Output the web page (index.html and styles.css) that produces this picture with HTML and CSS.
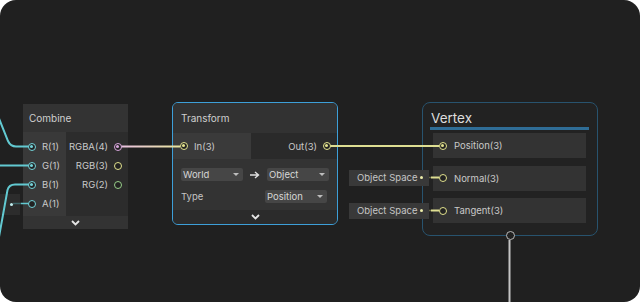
FILE: index.html
```html
<!DOCTYPE html>
<html lang="en">
<head>
    <meta charset="UTF-8">
    <meta name="viewport" content="width=device-width, initial-scale=1.0">
    <title>Shader Graph</title>
    <link rel="stylesheet" href="styles.css">
</head>
<body>
    <div class="graph">
        <!-- inline default value for A(1) -->
        <div class="inline-value combine-a"><span class="dot teal-dot"></span></div>

        <!-- Combine node -->
        <div class="node combine">
            <div class="node-title">Combine</div>
            <div class="node-ports">
                <div class="inputs">
                    <div class="slot"><span class="port teal on"></span>R(1)</div>
                    <div class="slot"><span class="port teal on"></span>G(1)</div>
                    <div class="slot"><span class="port teal on"></span>B(1)</div>
                    <div class="slot"><span class="port teal"></span>A(1)</div>
                </div>
                <div class="outputs">
                    <div class="slot">RGBA(4)<span class="port pink on"></span></div>
                    <div class="slot">RGB(3)<span class="port yellow"></span></div>
                    <div class="slot">RG(2)<span class="port green"></span></div>
                </div>
            </div>
            <div class="node-footer">
                <svg width="9" height="6" viewBox="0 0 9 6"><polyline points="1,1 4.5,4.5 8,1" fill="none" stroke="#e6e6e6" stroke-width="1.8"/></svg>
            </div>
        </div>

        <!-- Transform node -->
        <div class="node transform">
            <div class="node-title">Transform</div>
            <div class="node-ports">
                <div class="inputs">
                    <div class="slot"><span class="port yellow on"></span>In(3)</div>
                </div>
                <div class="outputs">
                    <div class="slot">Out(3)<span class="port yellow on"></span></div>
                </div>
            </div>
            <div class="node-controls">
                <div class="control-row">
                    <div class="dropdown">World<span class="caret"></span></div>
                    <svg class="arrow" width="10" height="8" viewBox="0 0 10 8"><path d="M0 4 H8 M5 1 L8.5 4 L5 7" fill="none" stroke="#e0e0e0" stroke-width="1.4"/></svg>
                    <div class="dropdown">Object<span class="caret"></span></div>
                </div>
                <div class="control-row">
                    <span class="control-label">Type</span>
                    <div class="dropdown type">Position<span class="caret"></span></div>
                </div>
            </div>
            <div class="node-footer">
                <svg width="9" height="6" viewBox="0 0 9 6"><polyline points="1,1 4.5,4.5 8,1" fill="none" stroke="#e6e6e6" stroke-width="1.8"/></svg>
            </div>
        </div>

        <!-- Vertex master stack -->
        <div class="node vertex">
            <div class="vertex-title">Vertex</div>
            <div class="vertex-bar"></div>
            <div class="blocks">
                <div class="block"><span class="port yellow on"></span>Position(3)</div>
                <div class="block"><span class="port yellow"></span>Normal(3)</div>
                <div class="block"><span class="port yellow"></span>Tangent(3)</div>
            </div>
            <span class="port gray stack-port"></span>
        </div>

        <div class="inline-value space normal-space">Object Space<span class="dot yellow-dot"></span></div>
        <div class="inline-value space tangent-space">Object Space<span class="dot yellow-dot"></span></div>

        <svg class="wires" width="640" height="302" viewBox="0 0 640 302">
            <defs>
                <linearGradient id="rgba-in" x1="118" y1="0" x2="183" y2="0" gradientUnits="userSpaceOnUse">
                    <stop offset="0" stop-color="#e9bfe3"/>
                    <stop offset="1" stop-color="#e6e69a"/>
                </linearGradient>
            </defs>
            <!-- vector1 wires into Combine -->
            <path d="M-2 116 L8 141 Q10.5 146.5 16 146.5 L29 146.5" class="wire teal-wire"/>
            <path d="M-2 165.5 L29 165.5" class="wire teal-wire"/>
            <path d="M-1 237 L7.5 190 Q9 184.5 15 184.5 L29 184.5" class="wire teal-wire"/>
            <path d="M13 203.5 L21 203.5" class="stub teal-dim"/>
            <path d="M21 203.5 L29 203.5" class="stub teal-wire"/>
            <!-- Combine -> Transform -->
            <path d="M121 146.5 L180 146.5" class="wire" stroke="url(#rgba-in)"/>
            <!-- Transform -> Vertex -->
            <path d="M330 146 L439 146" class="wire yellow-wire"/>
            <!-- Object Space stubs -->
            <path d="M423 177.5 L431 177.5" class="stub yellow-dim"/>
            <path d="M431 177.5 L439 177.5" class="wire yellow-wire"/>
            <path d="M423 210.5 L431 210.5" class="stub yellow-dim"/>
            <path d="M431 210.5 L439 210.5" class="wire yellow-wire"/>
            <!-- stack output -->
            <path d="M509.5 240 L509.5 304" class="wire gray-wire"/>
        </svg>
    </div>
</body>
</html>
```

FILE: styles.css
```css
body, html {
    margin: 0;
    padding: 0;
    background-color: #ffffff;
    font-family: Inter, "Noto Sans", sans-serif;
}
.graph {
    position: relative;
    width: 640px;
    height: 302px;
    background-color: #202020;
    border-radius: 16px;
    overflow: hidden;
}
.wires {
    position: absolute;
    left: 0;
    top: 0;
    z-index: 2;
    pointer-events: none;
}
.wire {
    fill: none;
    stroke-width: 2;
}
.stub {
    fill: none;
    stroke-width: 1.5;
}
.teal-wire { stroke: #62c9d1; }
.teal-dim { stroke: #3d6669; }
.yellow-wire { stroke: #dede92; }
.yellow-dim { stroke: #6a6a45; }
.gray-wire { stroke: #c4c4c4; }

/* nodes */
.node {
    position: absolute;
    display: flex;
    flex-direction: column;
    color: #c9c9c9;
    font-size: 9.5px;
}
.node-title {
    display: flex;
    align-items: center;
    padding-left: 6px;
    font-size: 10px;
    color: #cfcfcf;
    background-color: #333333;
}
.node-ports {
    display: flex;
}
.inputs {
    display: flex;
    flex-direction: column;
    background-color: #393939;
}
.outputs {
    flex: 1;
    display: flex;
    flex-direction: column;
    align-items: flex-end;
    background-color: #2c2c2c;
}
.slot {
    display: flex;
    align-items: center;
    height: 19px;
}
.inputs .slot .port {
    margin: 0 6px 0 5px;
}
.outputs .slot .port {
    margin: 0 6px 0 6px;
}
.node-footer {
    display: flex;
    justify-content: center;
    align-items: center;
    background-color: #303030;
}

/* ports */
.port {
    position: relative;
    z-index: 3;
    width: 8px;
    height: 8px;
    box-sizing: border-box;
    border-radius: 50%;
    border: 1.5px solid;
    background-color: #222222;
    flex-shrink: 0;
}
.port.on::after {
    content: "";
    position: absolute;
    left: 1px;
    top: 1px;
    width: 3px;
    height: 3px;
    border-radius: 50%;
    background-color: currentColor;
}
.teal { color: #74d3d9; border-color: #74d3d9; }
.pink { color: #d8a6dc; border-color: #d8a6dc; }
.yellow { color: #e2e28e; border-color: #e2e28e; }
.green { color: #98cf8a; border-color: #98cf8a; }
.gray { color: #b8b8b8; border-color: #b8b8b8; }

/* Combine */
.combine {
    left: 23px;
    top: 104px;
    width: 105px;
}
.combine .node-title {
    height: 28px;
}
.combine .inputs {
    width: 43px;
    padding: 5px 0 3px;
}
.combine .outputs {
    padding: 5px 0 3px;
}
.combine .node-footer {
    height: 13px;
    background-color: #333333;
}

/* Transform */
.transform {
    left: 172px;
    top: 102px;
    width: 164px;
    border: 1px solid #3d9fd8;
    border-radius: 6px;
    overflow: hidden;
    background-color: #303030;
}
.transform .node-title {
    height: 30px;
    padding-left: 8px;
    background-color: #323232;
}
.transform .node-ports {
    height: 26px;
}
.transform .inputs {
    width: 78px;
    justify-content: center;
    background-color: #3a3a3a;
}
.transform .outputs {
    justify-content: center;
    background-color: #2a2a2a;
}
.transform .inputs .slot .port {
    margin: 0 6px 0 7px;
}
.transform .outputs .slot .port {
    margin: 0 6px 0 6px;
}
.node-controls {
    display: flex;
    flex-direction: column;
    gap: 9px;
    padding: 9px 8px 7px 8px;
    background-color: #333333;
}
.control-row {
    display: flex;
    align-items: center;
    justify-content: space-between;
    height: 13px;
}
.control-label {
    color: #c4c4c4;
}
.dropdown {
    display: flex;
    align-items: center;
    justify-content: space-between;
    box-sizing: border-box;
    width: 62px;
    height: 13px;
    padding: 0 4px 0 2px;
    border-radius: 2px;
    background-color: #464646;
    color: #d6d6d6;
}
.dropdown.type {
    margin-right: 2px;
}
.caret {
    width: 0;
    height: 0;
    border-left: 3px solid transparent;
    border-right: 3px solid transparent;
    border-top: 3.5px solid #bdbdbd;
}
.transform .node-footer {
    height: 14px;
    background-color: #2b2b2b;
}

/* Vertex stack */
.vertex {
    left: 422px;
    top: 102px;
    width: 174px;
    height: 132px;
    border: 1px solid #28536e;
    border-radius: 8px;
    background-color: #222222;
}
.vertex-title {
    padding: 7px 0 0 8px;
    height: 17px;
    line-height: 17px;
    font-size: 13.5px;
    color: #dddddd;
}
.vertex-bar {
    height: 3px;
    margin: 0 8px 0 7px;
    background-color: #2f6d96;
}
.blocks {
    display: flex;
    flex-direction: column;
    gap: 7.5px;
    margin: 3px 11px 0 10px;
}
.block {
    display: flex;
    align-items: center;
    height: 25px;
    background-color: #333333;
}
.block .port {
    margin: 0 7px 0 6px;
}
.stack-port {
    position: absolute;
    left: 83px;
    bottom: -5px;
    width: 9px;
    height: 9px;
    background-color: #202020;
}

/* inline default values */
.inline-value {
    position: absolute;
    z-index: 3;
    display: flex;
    align-items: center;
    box-sizing: border-box;
}
.combine-a {
    z-index: 0;
    left: 0;
    top: 194px;
    width: 20px;
    height: 21px;
    justify-content: flex-end;
    padding-right: 7px;
    background-color: #2c2c2c;
}
.space {
    left: 349px;
    width: 80px;
    height: 16px;
    padding: 0 6px 0 8px;
    justify-content: space-between;
    background-color: #393939;
    color: #c6c6c6;
    font-size: 9.5px;
}
.normal-space { top: 169.5px; }
.tangent-space { top: 202.5px; }
.dot {
    width: 3px;
    height: 3px;
    border-radius: 50%;
}
.teal-dot { background-color: #bfecee; }
.yellow-dot { background-color: #eeeeaa; }
```
